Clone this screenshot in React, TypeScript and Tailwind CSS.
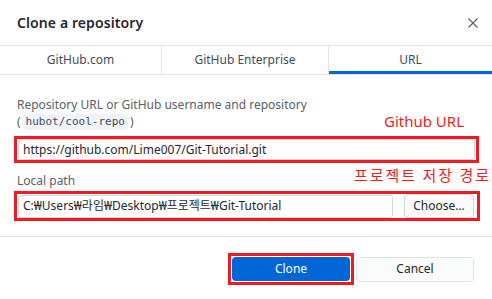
import React from "react";

export default function App() {
  const font = { fontFamily: '"Noto Sans", "Noto Sans CJK KR", sans-serif' };
  return (
    <div className="w-[492px] h-[299px] bg-white overflow-hidden text-[#24292e] relative" style={font}>
      {/* Header */}
      <div className="h-[46px] flex items-center justify-between border-b border-[#e1e4e8] pl-[17px] pr-[10px]">
        <div className="text-[14px] font-semibold tracking-[0.1px]">Clone a repository</div>
        <svg width="12" height="12" viewBox="0 0 12 12" className="mr-[3px] mt-[1px]">
          <path d="M1.5 1.5 L10.5 10.5 M10.5 1.5 L1.5 10.5" stroke="#586069" strokeWidth="1.1" />
        </svg>
      </div>
      {/* Tabs */}
      <div className="h-[29px] flex border-b border-[#e1e4e8] text-[12px] text-[#444d56]">
        <div className="w-[162px] flex items-center justify-center border-r border-[#e1e4e8]">GitHub.com</div>
        <div className="w-[167px] flex items-center justify-center border-r border-[#e1e4e8]">GitHub Enterprise</div>
        <div className="flex-1 relative flex items-center justify-center">
          URL
          <div className="absolute left-0 right-0 bottom-0 h-[3px] bg-[#0366d6]" />
        </div>
      </div>
      {/* Body */}
      <div className="pt-[22px] pl-[14px] pr-[12px]">
        <div className="pl-[3px] text-[12px] leading-[16px] text-[#586069]">
          Repository URL or GitHub username and repository
        </div>
        <div className="pl-[3px] mt-[1px] text-[12px] leading-[16px] text-[#586069] flex items-center">
          <span>(</span>
          <span
            className="mx-[1px] px-[4px] rounded-[5px] bg-[#f0f4f9] text-[11px] leading-[16px] text-[#444d56]"
            style={{ fontFamily: '"DejaVu Sans Mono", monospace' }}
          >
            hubot/cool-repo
          </span>
          <span>)</span>
        </div>
        {/* URL red box */}
        <div className="relative mt-[6px] w-[465px] border-[3px] border-[#ed1c24] px-[1px]">
          <div className="absolute right-[12px] top-[-27px] text-[15px] text-[#ed1c24] leading-[18px]">
            Github URL
          </div>
          <div className="h-[21px] bg-white border border-[#d1d5da] rounded-[3px] flex items-center pl-[4px] text-[12px] text-[#24292e]">
            https://github.com/Lime007/Git-Tutorial.git
          </div>
        </div>
        <div className="relative mt-[10px] pl-[3px] text-[12px] leading-[16px] text-[#586069]">
          Local path
          <div
            className="absolute right-[-11px] top-[-7px] text-[15px] text-[#ed1c24] leading-[18px] tracking-[2px]"
            style={{ fontFamily: '"Noto Sans CJK KR", sans-serif' }}
          >
            프로젝트 저장 경로
          </div>
        </div>
        {/* Local path red box */}
        <div className="mt-[2px] w-[466px] border-[3px] border-[#ed1c24] pl-[1px] pr-[3px] flex items-center gap-[11px]">
          <div className="flex-1 h-[23px] bg-white border border-[#d1d5da] rounded-[3px] flex items-center pl-[4px] text-[12px] text-[#24292e]">
            C:₩Users₩라임₩Desktop₩프로젝트₩Git-Tutorial
          </div>
          <div className="w-[70px] h-[24px] bg-[#fafbfc] border border-[#d1d5da] rounded-[4px] flex items-center justify-center text-[12px] text-[#24292e]">
            Choose...
          </div>
        </div>
      </div>
      {/* Footer */}
      <div className="absolute left-0 right-0 top-[236px] border-t border-[#e1e4e8]" />
      <div className="absolute left-[228px] top-[253px] flex items-center gap-[2px]">
        <div className="border-[3px] border-[#ed1c24] p-[1px]">
          <div className="w-[118px] h-[24px] bg-[#0366d6] rounded-[4px] flex items-center justify-center text-[12px] text-white">
            Clone
          </div>
        </div>
        <div className="w-[118px] h-[25px] bg-[#fafbfc] border border-[#e1e4e8] rounded-[4px] flex items-center justify-center text-[12px] text-[#24292e]">
          Cancel
        </div>
      </div>
    </div>
  );
}
